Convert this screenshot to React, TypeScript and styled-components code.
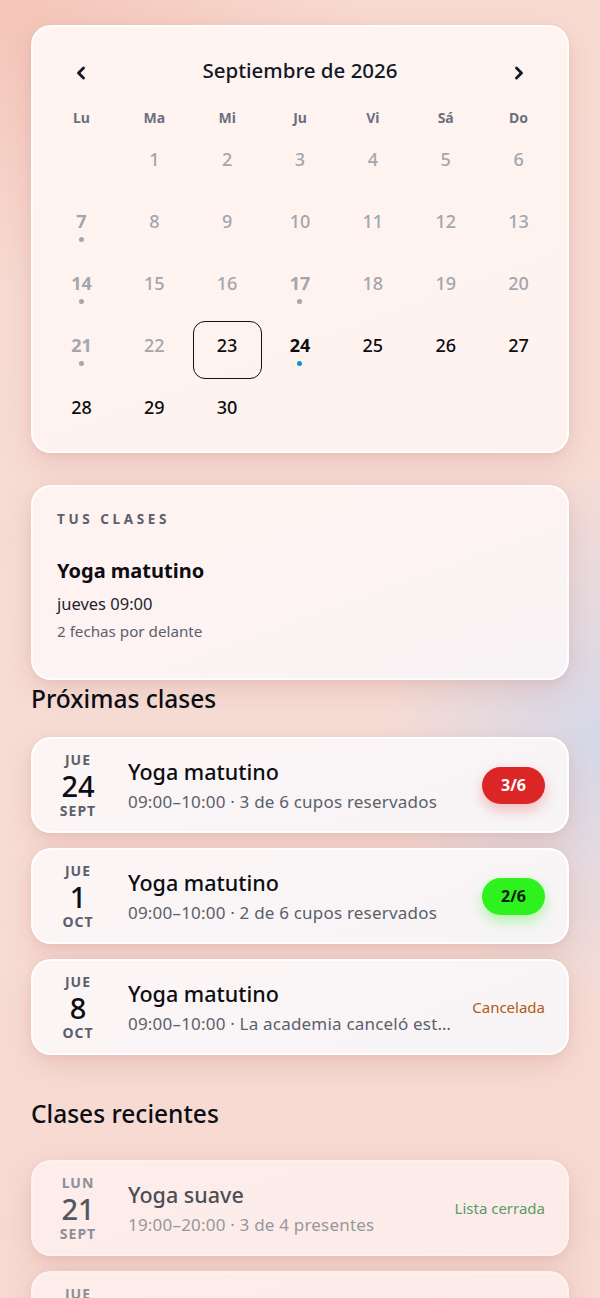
import React from "react";
import styled, { createGlobalStyle } from "styled-components";
import { ChevronLeft, ChevronRight } from "lucide-react";

const GlobalStyle = createGlobalStyle`
  html, body {
    margin: 0;
    padding: 0;
  }
  body {
    font-family: "Noto Sans", "Open Sans", sans-serif;
    color: #111827;
    background: #f7dad2;
    overflow: hidden;
  }
`;

type DayState = "past" | "today" | "selected" | "future";

interface Day {
  n: number;
  state: DayState;
  dot?: "gray" | "blue";
}

const leading = 1;
const days: Day[] = Array.from({ length: 30 }, (_, i) => {
  const n = i + 1;
  let state: DayState = "future";
  if (n < 23) state = "past";
  if (n === 23) state = "selected";
  if (n === 24) state = "today";
  let dot: Day["dot"];
  if ([7, 14, 17, 21].includes(n)) dot = "gray";
  if (n === 24) dot = "blue";
  return { n, state, dot };
});

const weekdays = ["Lu", "Ma", "Mi", "Ju", "Vi", "Sá", "Do"];

interface Session {
  wd: string;
  day: number;
  month: string;
  title: string;
  detail: string;
  status: "full" | "open" | "cancelled" | "closed";
  label: string;
}

const upcoming: Session[] = [
  {
    wd: "JUE",
    day: 24,
    month: "SEPT",
    title: "Yoga matutino",
    detail: "09:00–10:00 · 3 de 6 cupos reservados",
    status: "full",
    label: "3/6",
  },
  {
    wd: "JUE",
    day: 1,
    month: "OCT",
    title: "Yoga matutino",
    detail: "09:00–10:00 · 2 de 6 cupos reservados",
    status: "open",
    label: "2/6",
  },
  {
    wd: "JUE",
    day: 8,
    month: "OCT",
    title: "Yoga matutino",
    detail: "09:00–10:00 · La academia canceló esta clase",
    status: "cancelled",
    label: "Cancelada",
  },
];

const recent: Session[] = [
  {
    wd: "LUN",
    day: 21,
    month: "SEPT",
    title: "Yoga suave",
    detail: "19:00–20:00 · 3 de 4 presentes",
    status: "closed",
    label: "Lista cerrada",
  },
  {
    wd: "JUE",
    day: 17,
    month: "SEPT",
    title: "Yoga matutino",
    detail: "09:00–10:00 · 4 de 6 presentes",
    status: "closed",
    label: "Lista cerrada",
  },
];

export default function App() {
  return (
    <>
      <GlobalStyle />
      <Page>
        <CalendarCard>
          <CalHeader>
            <NavButton aria-label="Mes anterior">
              <ChevronLeft size={20} strokeWidth={3.4} />
            </NavButton>
            <MonthTitle>Septiembre de 2026</MonthTitle>
            <NavButton aria-label="Mes siguiente">
              <ChevronRight size={20} strokeWidth={3.4} />
            </NavButton>
          </CalHeader>
          <WeekRow>
            {weekdays.map((w) => (
              <WeekLabel key={w}>{w}</WeekLabel>
            ))}
          </WeekRow>
          <DayGrid>
            {Array.from({ length: leading }).map((_, i) => (
              <span key={"e" + i} />
            ))}
            {days.map((d) => (
              <DayCell key={d.n} $selected={d.state === "selected"}>
                <DayNum $state={d.state} $marked={!!d.dot}>
                  {d.n}
                </DayNum>
                <Dot $color={d.dot} />
              </DayCell>
            ))}
          </DayGrid>
        </CalendarCard>

        <SummaryCard>
          <Eyebrow>Tus clases</Eyebrow>
          <SummaryTitle>Yoga matutino</SummaryTitle>
          <SummaryLine>jueves 09:00</SummaryLine>
          <SummaryNote>2 fechas por delante</SummaryNote>
        </SummaryCard>

        <SectionTitle $top={2}>Próximas clases</SectionTitle>
        <List $top={21}>
          {upcoming.map((s, i) => (
            <SessionRow key={i} session={s} />
          ))}
        </List>

        <SectionTitle $top={42}>Clases recientes</SectionTitle>
        <List $top={29}>
          {recent.map((s, i) => (
            <SessionRow key={i} session={s} past />
          ))}
        </List>
      </Page>
    </>
  );
}

function SessionRow({ session, past }: { session: Session; past?: boolean }) {
  return (
    <RowCard $past={past}>
      <DateCol $past={past}>
        <DateSmall>{session.wd}</DateSmall>
        <DateBig>{session.day}</DateBig>
        <DateSmall>{session.month}</DateSmall>
      </DateCol>
      <RowBody>
        <RowTitle $past={past}>{session.title}</RowTitle>
        <RowDetail $past={past}>{session.detail}</RowDetail>
      </RowBody>
      {session.status === "full" || session.status === "open" ? (
        <Badge $kind={session.status}>{session.label}</Badge>
      ) : (
        <StatusText $kind={session.status}>{session.label}</StatusText>
      )}
    </RowCard>
  );
}

const Page = styled.div`
  height: 1298px;
  box-sizing: border-box;
  padding: 25px 31px 0;
  overflow: hidden;
  background:
    radial-gradient(ellipse 300px 380px at 100% 57%, rgba(212, 216, 234, 0.95), rgba(212, 216, 234, 0) 72%),
    radial-gradient(ellipse 520px 420px at 0% 0%, rgba(243, 190, 176, 0.75), rgba(243, 190, 176, 0) 72%),
    linear-gradient(180deg, #f8dad1 0%, #f6dcd5 45%, #f7dcd4 70%, #f6d9d1 100%);
`;

const Card = styled.div`
  box-sizing: border-box;
  border-radius: 20px;
  border: 2px solid rgba(255, 255, 255, 0.9);
  box-shadow: 0 10px 28px rgba(190, 120, 110, 0.22), 0 2px 6px rgba(190, 120, 110, 0.1);
`;

const CalendarCard = styled(Card)`
  height: 428px;
  padding: 26px 14px 0;
  background: linear-gradient(160deg, #fff4f0 0%, #fff3ef 60%, #fef2ee 100%);
`;

const CalHeader = styled.div`
  display: flex;
  align-items: center;
  justify-content: space-between;
  height: 34px;
  padding: 0 24px 0 24px;
`;

const NavButton = styled.button`
  border: none;
  background: none;
  padding: 0;
  width: 20px;
  height: 20px;
  display: flex;
  align-items: center;
  justify-content: center;
  color: #111827;
  cursor: pointer;
  margin-top: 5px;
`;

const MonthTitle = styled.div`
  font-size: 20.5px;
  font-weight: 500;
  color: #111827;
`;

const WeekRow = styled.div`
  display: grid;
  grid-template-columns: repeat(7, 1fr);
  column-gap: 4px;
  margin-top: 21px;
  height: 20px;
`;

const WeekLabel = styled.div`
  text-align: center;
  font-size: 14px;
  line-height: 20px;
  font-weight: 700;
  color: #6b7080;
`;

const DayGrid = styled.div`
  display: grid;
  grid-template-columns: repeat(7, 1fr);
  grid-auto-rows: 58px;
  gap: 4px;
  margin-top: 7px;
`;

const DayCell = styled.div<{ $selected: boolean }>`
  box-sizing: border-box;
  display: flex;
  flex-direction: column;
  align-items: center;
  justify-content: center;
  gap: 5px;
  border-radius: 12px;
  border: 1.5px solid ${(p) => (p.$selected ? "#111111" : "transparent")};
`;

const DayNum = styled.span<{ $state: DayState; $marked: boolean }>`
  font-size: 18px;
  line-height: 22px;
  font-weight: ${(p) => (p.$state === "today" || p.$marked ? 700 : 500)};
  color: ${(p) => (p.$state === "past" ? "#a2a6ad" : "#0b0d12")};
`;

const Dot = styled.span<{ $color?: "gray" | "blue" }>`
  width: 5px;
  height: 5px;
  border-radius: 50%;
  background: ${(p) => (p.$color === "blue" ? "#1190d8" : "#a2a6ad")};
  visibility: ${(p) => (p.$color ? "visible" : "hidden")};
`;

const SummaryCard = styled(Card)`
  margin-top: 32px;
  height: 195px;
  padding: 24px 24px;
  background: linear-gradient(160deg, #fff3f0 0%, #fdf3f2 50%, #f7f3f6 100%);
`;

const Eyebrow = styled.div`
  font-size: 13.5px;
  line-height: 16px;
  font-weight: 700;
  letter-spacing: 3.6px;
  text-transform: uppercase;
  color: #5c606c;
`;

const SummaryTitle = styled.div`
  margin-top: 31px;
  font-size: 20px;
  line-height: 26px;
  font-weight: 700;
  color: #0b0d12;
`;

const SummaryLine = styled.div`
  margin-top: 9px;
  font-size: 16.5px;
  line-height: 22px;
  color: #1f2330;
`;

const SummaryNote = styled.div`
  margin-top: 6px;
  font-size: 15.2px;
  line-height: 20px;
  color: #5c606c;
`;

const SectionTitle = styled.h2<{ $top: number }>`
  margin: ${(p) => p.$top}px 0 0;
  font-size: 24.5px;
  line-height: 34px;
  font-weight: 500;
  color: #0b0d12;
`;

const List = styled.div<{ $top: number }>`
  display: flex;
  flex-direction: column;
  gap: 15px;
  margin-top: ${(p) => p.$top}px;
`;

const RowCard = styled(Card)<{ $past?: boolean }>`
  flex: none;
  display: flex;
  align-items: center;
  height: 96px;
  padding: 0 22px 0 16px;
  gap: 21px;
  background: ${(p) =>
    p.$past
      ? "linear-gradient(160deg, #fdeeeb 0%, #fcebe8 100%)"
      : "linear-gradient(160deg, #fdf5f4 0%, #f9f5f7 60%, #f7f4f6 100%)"};
  border-color: ${(p) => (p.$past ? "rgba(255,245,243,0.7)" : "rgba(255,255,255,0.95)")};
`;

const DateCol = styled.div<{ $past?: boolean }>`
  width: 58px;
  flex: none;
  display: flex;
  flex-direction: column;
  align-items: center;
  color: ${(p) => (p.$past ? "#8d8f96" : "#5c606c")};
  & > :nth-child(2) {
    color: ${(p) => (p.$past ? "#56575e" : "#0b0d12")};
  }
`;

const DateSmall = styled.span`
  font-size: 14px;
  line-height: 16px;
  font-weight: 700;
  letter-spacing: 1px;
`;

const DateBig = styled.span`
  font-size: 29px;
  line-height: 32px;
  margin: 2px 0 1px;
  font-weight: 500;
`;

const RowBody = styled.div`
  flex: 1;
  min-width: 0;
  display: flex;
  flex-direction: column;
`;

const RowTitle = styled.div<{ $past?: boolean }>`
  font-size: 21.5px;
  line-height: 28px;
  font-weight: 500;
  color: ${(p) => (p.$past ? "#4d4e55" : "#0b0d12")};
`;

const RowDetail = styled.div<{ $past?: boolean }>`
  margin-top: 5px;
  font-size: 17px;
  line-height: 22px;
  letter-spacing: 0.2px;
  color: ${(p) => (p.$past ? "#96979d" : "#5a5f6b")};
  white-space: nowrap;
  overflow: hidden;
  text-overflow: ellipsis;
`;

const Badge = styled.span<{ $kind: "full" | "open" }>`
  flex: none;
  box-sizing: border-box;
  height: 37px;
  min-width: 63px;
  padding: 0 16px;
  border-radius: 19px;
  display: flex;
  align-items: center;
  justify-content: center;
  font-size: 16px;
  font-weight: 700;
  color: ${(p) => (p.$kind === "full" ? "#ffffff" : "#0b1a0b")};
  background: ${(p) => (p.$kind === "full" ? "#dc2626" : "#2ef21e")};
  box-shadow: ${(p) =>
    p.$kind === "full"
      ? "0 6px 14px rgba(220, 38, 38, 0.28)"
      : "0 6px 14px rgba(46, 242, 30, 0.35)"};
`;

const StatusText = styled.span<{ $kind: "cancelled" | "closed" }>`
  flex: none;
  font-size: 15px;
  color: ${(p) => (p.$kind === "cancelled" ? "#b45a12" : "#5a9a68")};
`;
